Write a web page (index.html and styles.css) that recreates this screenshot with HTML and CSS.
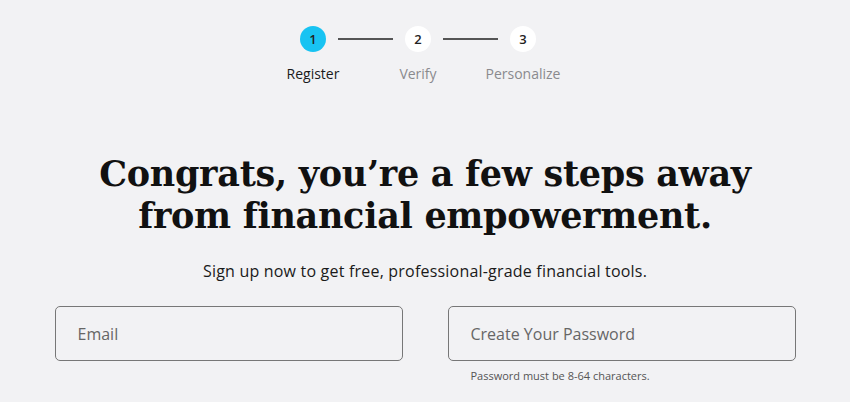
FILE: index.html
```html
<!DOCTYPE html>
<html lang="en">
<head>
    <meta charset="UTF-8">
    <meta name="viewport" content="width=device-width, initial-scale=1.0">
    <title>Sign Up</title>
    <link rel="stylesheet" href="styles.css">
</head>
<body>
    <div class="signup">
        <div class="stepper">
            <div class="step active">
                <div class="step-dot">1</div>
                <div class="step-label">Register</div>
            </div>
            <div class="step-line"></div>
            <div class="step">
                <div class="step-dot">2</div>
                <div class="step-label">Verify</div>
            </div>
            <div class="step-line"></div>
            <div class="step">
                <div class="step-dot">3</div>
                <div class="step-label">Personalize</div>
            </div>
        </div>

        <h1 class="headline">Congrats, you’re a few steps away<br>from financial empowerment.</h1>
        <p class="subtitle">Sign up now to get free, professional-grade financial tools.</p>

        <form class="signup-form">
            <div class="field">
                <input type="email" placeholder="Email">
            </div>
            <div class="field">
                <input type="password" placeholder="Create Your Password">
                <div class="hint">Password must be 8-64 characters.</div>
            </div>
        </form>
    </div>
</body>
</html>
```

FILE: styles.css
```css
body {
    margin: 0;
    background: #f2f2f4;
    font-family: 'Open Sans', 'Noto Sans', sans-serif;
    color: #1a1a1a;
}
.signup {
    display: flex;
    flex-direction: column;
    align-items: center;
    padding-top: 26px;
}

/* Stepper */
.stepper {
    display: flex;
    align-items: flex-start;
    margin-left: -14px;
}
.step {
    display: flex;
    flex-direction: column;
    align-items: center;
    width: 26px;
}
.step-dot {
    width: 26px;
    height: 26px;
    border-radius: 50%;
    background: #fff;
    display: flex;
    align-items: center;
    justify-content: center;
    font-size: 13px;
    font-weight: 600;
    color: #222;
}
.step.active .step-dot {
    background: #18c3f2;
}
.step-label {
    margin-top: 12px;
    font-size: 14px;
    white-space: nowrap;
    color: #8a8a8e;
}
.step.active .step-label {
    color: #1a1a1a;
}
.step-line {
    width: 55px;
    height: 1.5px;
    background: #555;
    margin: 12px 12px 0;
}

/* Heading */
.headline {
    margin: 70px 0 0;
    font-family: 'DejaVu Serif', serif;
    font-size: 35px;
    line-height: 42px;
    font-weight: bold;
    text-align: center;
    color: #111;
    letter-spacing: -0.3px;
}
.subtitle {
    margin: 23px 0 0;
    font-size: 16px;
    letter-spacing: 0.2px;
    color: #1a1a1a;
}

/* Form */
.signup-form {
    display: flex;
    gap: 45px;
    margin-top: 24px;
}
.field {
    width: 348px;
}
.field input {
    box-sizing: border-box;
    width: 100%;
    height: 55px;
    padding: 0 22px;
    border: 1.5px solid #777;
    border-radius: 5px;
    background: transparent;
    font-family: inherit;
    font-size: 16px;
    outline: none;
}
.field input::placeholder {
    color: #666;
}
.hint {
    margin: 7px 0 0 23px;
    font-size: 11px;
    color: #555;
}
```
